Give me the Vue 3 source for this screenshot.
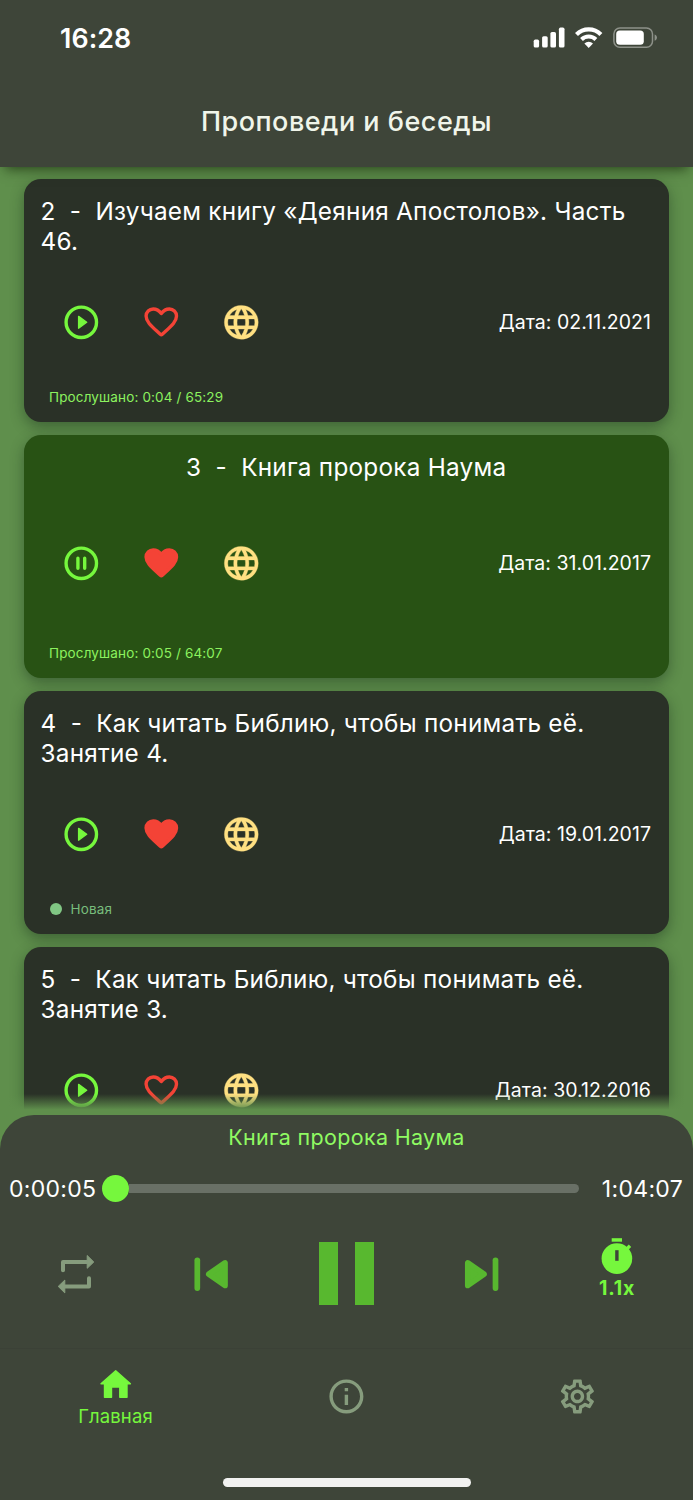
<script setup>
const cards = [
  { id: 2, title: 'Изучаем книгу «Деяния Апостолов». Часть 46.', date: '02.11.2021', heard: '0:04 / 65:29' },
  { id: 3, title: 'Книга пророка Наума', date: '31.01.2017', heard: '0:05 / 64:07', active: true, liked: true },
  { id: 4, title: 'Как читать Библию, чтобы понимать её. Занятие 4.', date: '19.01.2017', liked: true, fresh: true },
  { id: 5, title: 'Как читать Библию, чтобы понимать её. Занятие 3.', date: '30.12.2016' },
]
</script>

<template>
  <div class="app">
    <header class="header">
      <div class="status">
        <span class="clock">16:28</span>
        <svg class="system" viewBox="0 0 124 24" fill="#fff">
          <rect x="0.7" y="13.6" width="5.4" height="8" rx="1.6" />
          <rect x="9.1" y="10.2" width="5.6" height="11.4" rx="1.6" />
          <rect x="17.4" y="6" width="5.6" height="15.6" rx="1.6" />
          <rect x="25.9" y="1.6" width="5.6" height="20" rx="1.6" />
          <g fill="none" stroke="#fff">
            <path d="M43.500 8.400a17.300 17.300 0 0 1 24.400 0" stroke-width="4.200" />
            <path d="M48.500 13.500a10.200 10.200 0 0 1 14.400 0" stroke-width="4" />
          </g>
          <path d="M55.7 22l-4.3-4.4a6.2 6.2 0 0 1 8.6 0z" />
          <rect x="80.9" y="2" width="38.6" height="19.2" rx="6" fill="none" stroke="#8d9189" stroke-width="1.5" />
          <rect x="83.2" y="4.4" width="27.6" height="14.4" rx="3.6" />
          <path d="M121.6 8.4c1.5.5 2.4 1.700 2.400 3.200s-.9 2.700-2.400 3.200z" fill="#8d9189" />
        </svg>
      </div>
      <h1>Проповеди и беседы</h1>
    </header>

    <main class="list">
      <article v-for="c in cards" :key="c.id" class="card" :class="{ active: c.active }">
        <h2>{{ c.id }}&nbsp; -&nbsp; {{ c.title }}</h2>
        <div class="actions">
          <svg class="icon play" viewBox="0 0 24 24">
            <circle cx="12" cy="12" r="9" fill="none" stroke="currentColor" stroke-width="2" />
            <path v-if="c.active" d="M10 9v6M14 9v6" stroke="currentColor" stroke-width="2" stroke-linecap="round" />
            <path v-else d="M10.400 8.500L15.200 12L10.400 15.500z" fill="currentColor" stroke="currentColor" stroke-width=".8" stroke-linejoin="round" />
          </svg>
          <svg class="icon heart" viewBox="0 0 24 24">
            <path d="M11.400 19.100C6.700 14.700 3 11.900 3 8.300 3 5.900 4.900 4.100 7.200 4.100c1.800 0 3.600 1 4.800 2.700 1.200-1.700 3-2.700 4.800-2.700C19.100 4.100 21 5.900 21 8.300c0 3.600-3.700 6.400-8.400 10.800q-.6.500-1.200 0z" :fill="c.liked ? 'currentColor' : 'none'" stroke="currentColor" stroke-width="2" stroke-linejoin="round" />
          </svg>
          <svg class="icon globe" viewBox="0 0 24 24" fill="currentColor" stroke="currentColor" stroke-width=".2">
            <path d="M11.990 2C6.470 2 2 6.480 2 12s4.470 10 9.990 10C17.520 22 22 17.520 22 12S17.520 2 11.990 2zm6.930 6h-2.950c-.32-1.250-.78-2.450-1.380-3.560 1.840.63 3.370 1.910 4.330 3.560zM12 4.040c.83 1.200 1.480 2.530 1.910 3.960h-3.820c.43-1.430 1.080-2.760 1.910-3.960zM4.260 14C4.100 13.360 4 12.690 4 12s.1-1.360.26-2h3.380c-.08.66-.14 1.320-.14 2s.06 1.340.14 2H4.260zm.82 2h2.950c.32 1.250.78 2.450 1.380 3.560-1.840-.63-3.370-1.900-4.330-3.560zm2.950-8H5.080c.96-1.660 2.490-2.930 4.330-3.560C8.810 5.550 8.350 6.750 8.030 8zM12 19.960c-.83-1.200-1.480-2.530-1.910-3.960h3.820c-.43 1.430-1.080 2.760-1.910 3.960zM14.340 14H9.660c-.09-.66-.16-1.320-.16-2s.07-1.350.16-2h4.680c.09.65.16 1.320.16 2s-.07 1.340-.16 2zm.25 5.560c.6-1.110 1.060-2.310 1.380-3.560h2.950c-.96 1.650-2.490 2.930-4.330 3.560zM16.360 14c.08-.66.14-1.320.14-2s-.06-1.340-.14-2h3.380c.16.64.26 1.310.26 2s-.1 1.360-.26 2h-3.380z" />
          </svg>
          <span class="date">Дата: {{ c.date }}</span>
        </div>
        <div v-if="c.heard" class="heard">Прослушано: {{ c.heard }}</div>
        <div v-else-if="c.fresh" class="fresh"><i></i>Новая</div>
        <div v-else class="heard"></div>
      </article>
    </main>

    <section class="bottom">
      <div class="now">Книга пророка Наума</div>
      <div class="seek">
        <span class="elapsed">0:00:05</span>
        <div class="thumb"></div>
        <div class="track"></div>
        <span class="total">1:04:07</span>
      </div>
      <div class="controls">
        <div><svg class="c40" viewBox="0 0 40 40" fill="#869c7d" stroke="#869c7d">
          <g><path d="M7 16.200V8H31" fill="none" stroke-width="4" stroke-linecap="round" stroke-linejoin="round" /><path d="M31.200 1.500L37.800 8L31.200 14.300z" stroke-width="1" stroke-linejoin="round" /></g>
          <g transform="rotate(180 20 20.200)"><path d="M7 16.200V8H31" fill="none" stroke-width="4" stroke-linecap="round" stroke-linejoin="round" /><path d="M31.200 1.500L37.800 8L31.200 14.300z" stroke-width="1" stroke-linejoin="round" /></g>
        </svg></div>
        <div><svg class="c40" viewBox="0 0 40 40" fill="#58b82f" stroke="#58b82f">
          <path d="M6.300 6.300V34.100" stroke-width="5.700" stroke-linecap="round" /><path d="M17.800 20.200L34 8.900V31.500z" stroke-width="5.700" stroke-linejoin="round" />
        </svg></div>
        <div class="pause"><i></i><i></i></div>
        <div><svg class="c40" viewBox="0 0 40 40" fill="#58b82f" stroke="#58b82f">
          <path d="M34.500 6.300V34.100" stroke-width="5.700" stroke-linecap="round" /><path d="M23 20.200L6.800 8.900V31.500z" stroke-width="5.700" stroke-linejoin="round" />
        </svg></div>
        <div class="speed">
          <svg viewBox="0 0 40 36"><path d="M14.700.2h10.300v3.500H14.700z" fill="#76f73d" /><circle cx="19.900" cy="20.600" r="15.300" fill="#76f73d" /><path d="M29 11.700l4-4" stroke="#76f73d" stroke-width="3.400" /><path d="M18.200 12.200h3.400v10.600h-3.400z" fill="#3e4539" /></svg>
          <span>1.1x</span>
        </div>
      </div>
      <nav class="nav">
        <div class="home">
          <svg viewBox="0 0 34 32" fill="#76f73d" stroke="#76f73d" stroke-linejoin="round"><path d="M16.700 1.700L31.400 14.700H28V28.200H20.800V18.100H12.500V28.200H5.500V14.700H2z" stroke-width="1.400" /></svg>
          <span>Главная</span>
        </div>
        <div><svg class="nicon" viewBox="0 0 24 24" fill="currentColor"><path d="M11 7h2v2h-2zm0 4h2v6h-2zm1-9C6.480 2 2 6.480 2 12s4.480 10 10 10 10-4.480 10-10S17.520 2 12 2zm0 18c-4.410 0-8-3.590-8-8s3.590-8 8-8 8 3.590 8 8-3.590 8-8 8z" /></svg></div>
        <div><svg class="nicon" viewBox="0 0 24 24" fill="currentColor"><path d="M19.430 12.980c.04-.32.07-.64.07-.98 0-.34-.03-.66-.07-.98l2.110-1.650c.19-.15.24-.42.12-.64l-2-3.460c-.09-.16-.26-.25-.44-.25-.06 0-.12.01-.17.03l-2.490 1c-.52-.4-1.080-.73-1.690-.98l-.38-2.650C14.460 2.180 14.250 2 14 2h-4c-.25 0-.46.18-.49.42l-.38 2.650c-.61.25-1.170.59-1.690.98l-2.490-1c-.06-.02-.12-.03-.18-.03-.17 0-.34.09-.43.25l-2 3.460c-.13.22-.07.49.12.64l2.110 1.650c-.04.32-.07.65-.07.98 0 .33.03.66.07.98l-2.110 1.650c-.19.15-.24.42-.12.64l2 3.460c.09.16.26.25.44.25.06 0 .12-.01.17-.03l2.490-1c.52.4 1.080.73 1.690.98l.38 2.650c.03.24.24.42.49.42h4c.25 0 .46-.18.49-.42l.38-2.650c.61-.25 1.170-.59 1.690-.98l2.490 1c.06.02.12.03.18.03.17 0 .34-.09.43-.25l2-3.460c.12-.22.07-.49-.12-.64l-2.110-1.650zm-1.980-1.710c.04.31.05.52.05.73 0 .21-.02.43-.05.73l-.14 1.130.89.7 1.080.84-.7 1.210-1.270-.51-1.040-.42-.9.68c-.43.32-.84.56-1.250.73l-1.060.43-.16 1.130-.2 1.350h-1.400l-.19-1.350-.16-1.130-1.060-.43c-.43-.18-.83-.41-1.230-.71l-.91-.7-1.060.43-1.270.51-.7-1.210 1.080-.84.89-.7-.14-1.130c-.03-.31-.05-.54-.05-.74s.02-.43.05-.73l.14-1.130-.89-.7-1.080-.84.7-1.210 1.270.51 1.040.42.9-.68c.43-.32.84-.56 1.250-.73l1.060-.43.16-1.130.2-1.350h1.390l.19 1.350.16 1.130 1.060.43c.43.18.83.41 1.230.71l.91.7 1.060-.43 1.270-.51.7 1.210-1.070.85-.89.7.14 1.130zM12 8c-2.210 0-4 1.790-4 4s1.790 4 4 4 4-1.790 4-4-1.790-4-4-4zm0 6c-1.100 0-2-.9-2-2s.9-2 2-2 2 .9 2 2-.9 2-2 2z" /></svg></div>
      </nav>
      <div class="indicator"></div>
    </section>
  </div>
</template>

<style>
body { background: #5f8f4c; }
</style>

<style scoped>
* { box-sizing: border-box; }
.app { width: 693px; height: 1500px; display: flex; flex-direction: column; overflow: hidden; background: #5f8f4c; color: #fff; font-family: Inter, "Liberation Sans", sans-serif; white-space: nowrap; }
svg { display: block; flex: none; }
h1, h2 { margin: 0; font-weight: 400; }
.header { position: relative; z-index: 2; height: 167px; flex: none; display: flex; flex-direction: column; background: #3e4539; box-shadow: 0 7px 12px -5px rgba(20, 40, 10, .75); }
.status { display: flex; justify-content: space-between; align-items: center; height: 48px; margin-top: 14px; padding: 0 36px 0 60px; }
.clock { font-size: 26.800px; font-weight: 600; letter-spacing: .1px; }
.system { width: 124px; height: 24px; }
h1 { margin-top: 42px; text-align: center; font-size: 27px; line-height: 36px; font-weight: 450; letter-spacing: .5px; color: #f0f5ea; }
.list { position: relative; height: 948px; flex: none; overflow: hidden; padding: 12.400px 24px 0; display: flex; flex-direction: column; gap: 13.800px; }
.list::after { content: ""; position: absolute; left: 0; right: 0; bottom: 0; height: 21px; background: linear-gradient(rgba(95, 143, 76, 0), #5f8f4c 75%); }
.card { flex: none; height: 242.200px; border-radius: 17px; background: #2a3127; padding: 17px 18px 16px 16.500px; display: flex; flex-direction: column; justify-content: space-between; box-shadow: 0 5px 14px rgba(20, 40, 25, .42); }
.card.active { background: #285214; }
h2 { font-size: 24.300px; line-height: 30px; letter-spacing: .26px; white-space: normal; }
.active h2 { text-align: center; padding-left: 1px; }
.actions { display: flex; align-items: center; gap: 39.600px; height: 40.800px; padding-left: 20.200px; }
.icon { width: 40.600px; height: 40.600px; }
.play { color: #76f73d; }
.heart { color: #f44336; }
.globe { color: #ffe082; }
.date { margin-left: auto; padding-top: 1px; font-size: 19.500px; letter-spacing: .04px; }
.heard, .fresh { height: 18px; line-height: 18px; padding-left: 8.500px; font-size: 13.500px; letter-spacing: .14px; color: #8cf25f; }
.fresh { display: flex; align-items: center; gap: 9px; padding-left: 9px; color: #78bd7c; }
.fresh i { width: 12px; height: 12px; border-radius: 50%; background: #81c784; }
.bottom { height: 385px; flex: none; background: #3e4539; border-radius: 34px 34px 0 0; display: flex; flex-direction: column; }
.now { height: 46px; line-height: 45px; text-align: center; font-size: 21.500px; letter-spacing: .32px; color: #8ffa62; }
.seek { display: flex; align-items: center; height: 55px; padding: 0 10px 0 9px; }
.elapsed { width: 93px; font-size: 23px; letter-spacing: .3px; }
.thumb { width: 27px; height: 27px; border-radius: 50%; background: #76f73d; flex: none; }
.track { width: 450px; height: 9px; background: #697066; border-radius: 0 5px 5px 0; flex: none; }
.total { margin-left: auto; font-size: 23px; letter-spacing: .3px; }
.controls { display: flex; height: 132px; padding: 0 10px 0 8px; }
.controls > div { width: 135px; height: 115px; display: flex; align-items: center; justify-content: center; }
.c40 { width: 40px; height: 40px; }
.controls .pause { gap: 17.600px; padding: 0 0 0 2px; }
.pause i { width: 18.400px; height: 62.500px; background: #58b82f; }
.controls .speed { flex-direction: column; justify-content: flex-start; padding: 22px 0 0 3px; }
.speed svg { width: 40px; height: 36px; }
.speed span { font-size: 19.500px; line-height: 29px; font-weight: 700; letter-spacing: .8px; color: #76f73d; }
.nav { display: flex; height: 95px; border-top: 1px solid #3b4137; color: #869c7d; }
.nav > div { width: 231px; display: flex; align-items: center; justify-content: center; }
.nav .home { flex-direction: column; justify-content: flex-start; padding-top: 19.500px; }
.home svg { width: 34px; height: 32px; }
.home span { font-size: 18.500px; line-height: 30px; letter-spacing: .1px; color: #76f73d; }
.nicon { width: 40.800px; height: 40.800px; }
.indicator { width: 248px; height: 9px; margin: 35px auto 0; border-radius: 5px; background: #f2f2f1; }
</style>
